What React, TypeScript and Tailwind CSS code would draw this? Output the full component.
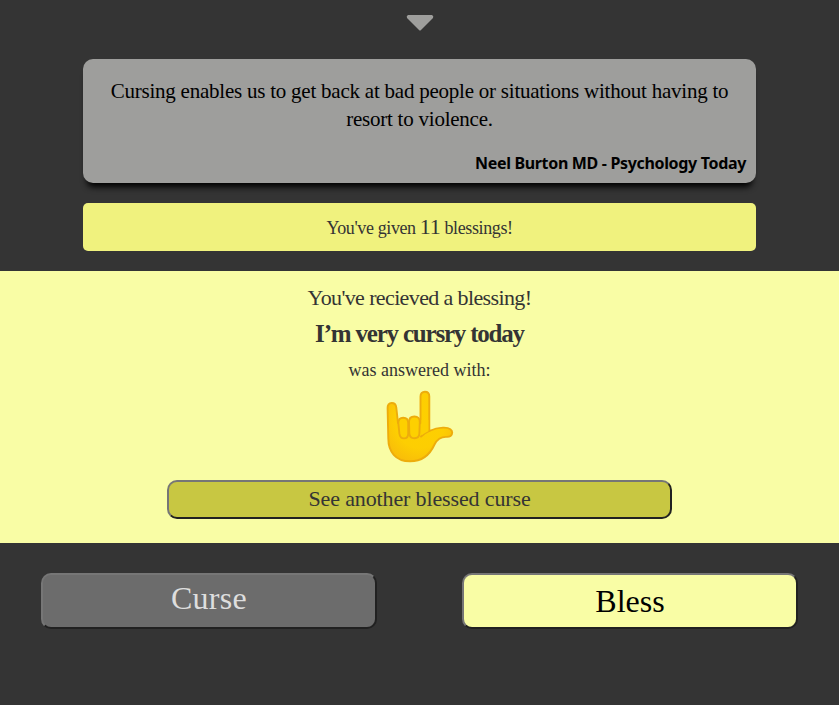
const serif = "font-['Liberation_Serif',serif]";

function HandSign() {
  return (
    <svg width="70" height="74" viewBox="0 0 70 74" fill="none" className="block">
      <defs>
        <radialGradient id="skin" cx="0.5" cy="0.42" r="0.65">
          <stop offset="0" stopColor="#fdd000" />
          <stop offset="0.6" stopColor="#fdce02" />
          <stop offset="1" stopColor="#f8bb0a" />
        </radialGradient>
      </defs>
      <g stroke="#edac0c" strokeWidth="1.9" strokeLinecap="round" strokeLinejoin="round">
        <path
          d="M2.600 18C2.400 14.800 4 13 6.700 13s4.300 1.700 4.600 4.500L13 33h22.500L35.500 6.500C35.500 3.500 37.200 1.800 39.900 1.800s4.400 1.700 4.400 4.700V41c4.500-2.300 9.500-3.600 14.700-3.400 5.300.2 8.200 2.100 8.200 5 0 3.100-2.400 4.500-5.600 4.300-6.300-.3-9.400 2.300-12.100 7.600-5 11-13.500 16.800-24.300 16.800C10.500 71.300 3.300 61.500 3.300 48.500z"
          fill="url(#skin)"
        />
        <path d="M13.300 33c0-3.300 1.900-5.300 4.900-5.300s5 2 5 5.300v10.500c0 3.100-1.500 4.900-4.200 4.900s-4.200-1.600-4.600-4.700z" fill="#fdd000" />
        <path d="M24 32c0-3.500 2-5.500 5.400-5.500 3.500 0 5.500 2 5.400 5.500l-.4 11c-.1 3.400-1.800 5.300-4.900 5.300s-5-1.800-5.200-5.300z" fill="#fdd000" />
        <path d="M36 46.500c2.500-2.500 5-4 8.300-5.500" />
      </g>
      <path d="M36.600 30h6.700v11.200c-2.800 1.300-4.700 2.500-6.700 4.200z" fill="#fdd000" />
    </svg>
  );
}

export default function App() {
  return (
    <div className={`flex h-[705px] w-[839px] flex-col overflow-hidden bg-[#343434] text-[#343434] ${serif}`}>
      <div className="flex h-[59px] shrink-0 justify-center pt-[14px]">
        <svg width="28" height="18" viewBox="0 0 28 18" className="block">
          <path d="M2 1h24q2 1 1 3L15 16q-1 1-2 0L1 4Q0 2 2 1z" fill="#9e9e9c" />
        </svg>
      </div>

      <div className="mx-[83px] h-[124px] shrink-0 rounded-[10px] bg-[#9e9e9c] pt-[18px] text-black shadow-[0_8px_6px_-4px_#000]">
        <p className="text-center text-[21px] leading-7 tracking-[-0.23px] whitespace-nowrap">
          <span className="block">
            Cursing enables us to get back at bad people or situations without having to
          </span>
          <span className="block">resort to violence.</span>
        </p>
        <p className="mt-[18px] pr-[10px] text-right font-['Noto_Sans',sans-serif] text-[16px] leading-6 font-bold tracking-[-0.33px] whitespace-nowrap">
          Neel Burton MD - Psychology Today
        </p>
      </div>

      <div className="mx-[83px] mt-5 flex h-12 shrink-0 items-center justify-center rounded-[5px] bg-[#f0f27e]">
        <p className="text-[18px] leading-6 tracking-[-0.38px] whitespace-nowrap">
          You've given <span className="text-[22px] leading-6">11</span> blessings!
        </p>
      </div>

      <section className="mt-5 flex h-[272px] shrink-0 flex-col items-center bg-[#f9fda5] pt-[13px] whitespace-nowrap">
        <p className="text-[22px] leading-7 tracking-[-0.62px]">You've recieved a blessing!</p>
        <p className="mt-[6px] text-[25px] leading-8 font-bold tracking-[-1.2px]">I’m very cursry today</p>
        <p className="mt-[8px] text-[18px] leading-6">was answered with:</p>
        <div className="mt-[8px]">
          <HandSign />
        </div>
        <button className="mt-[16px] h-[39px] w-[505px] rounded-[10px] border-2 border-t-[#767676] border-r-[#212121] border-b-[#212121] border-l-[#767676] bg-[#c8c742] pb-[2px] text-[22px] leading-8 tracking-[-0.13px]">
          See another blessed curse
        </button>
      </section>

      <div className="mt-[30px] flex justify-between px-[41px]">
        <button className="h-14 w-[336px] rounded-[10px] border-2 border-t-[#767676] border-r-[#212121] border-b-[#212121] border-l-[#767676] bg-[#6c6c6c] pb-[6px] text-[32px] leading-9 tracking-[0.3px] text-[#dedede]">
          Curse
        </button>
        <button className="h-14 w-[336px] rounded-[10px] border-2 border-t-[#767676] border-r-[#212121] border-b-[#212121] border-l-[#767676] bg-[#f9fda5] text-[32px] leading-9 text-black">
          Bless
        </button>
      </div>
    </div>
  );
}
